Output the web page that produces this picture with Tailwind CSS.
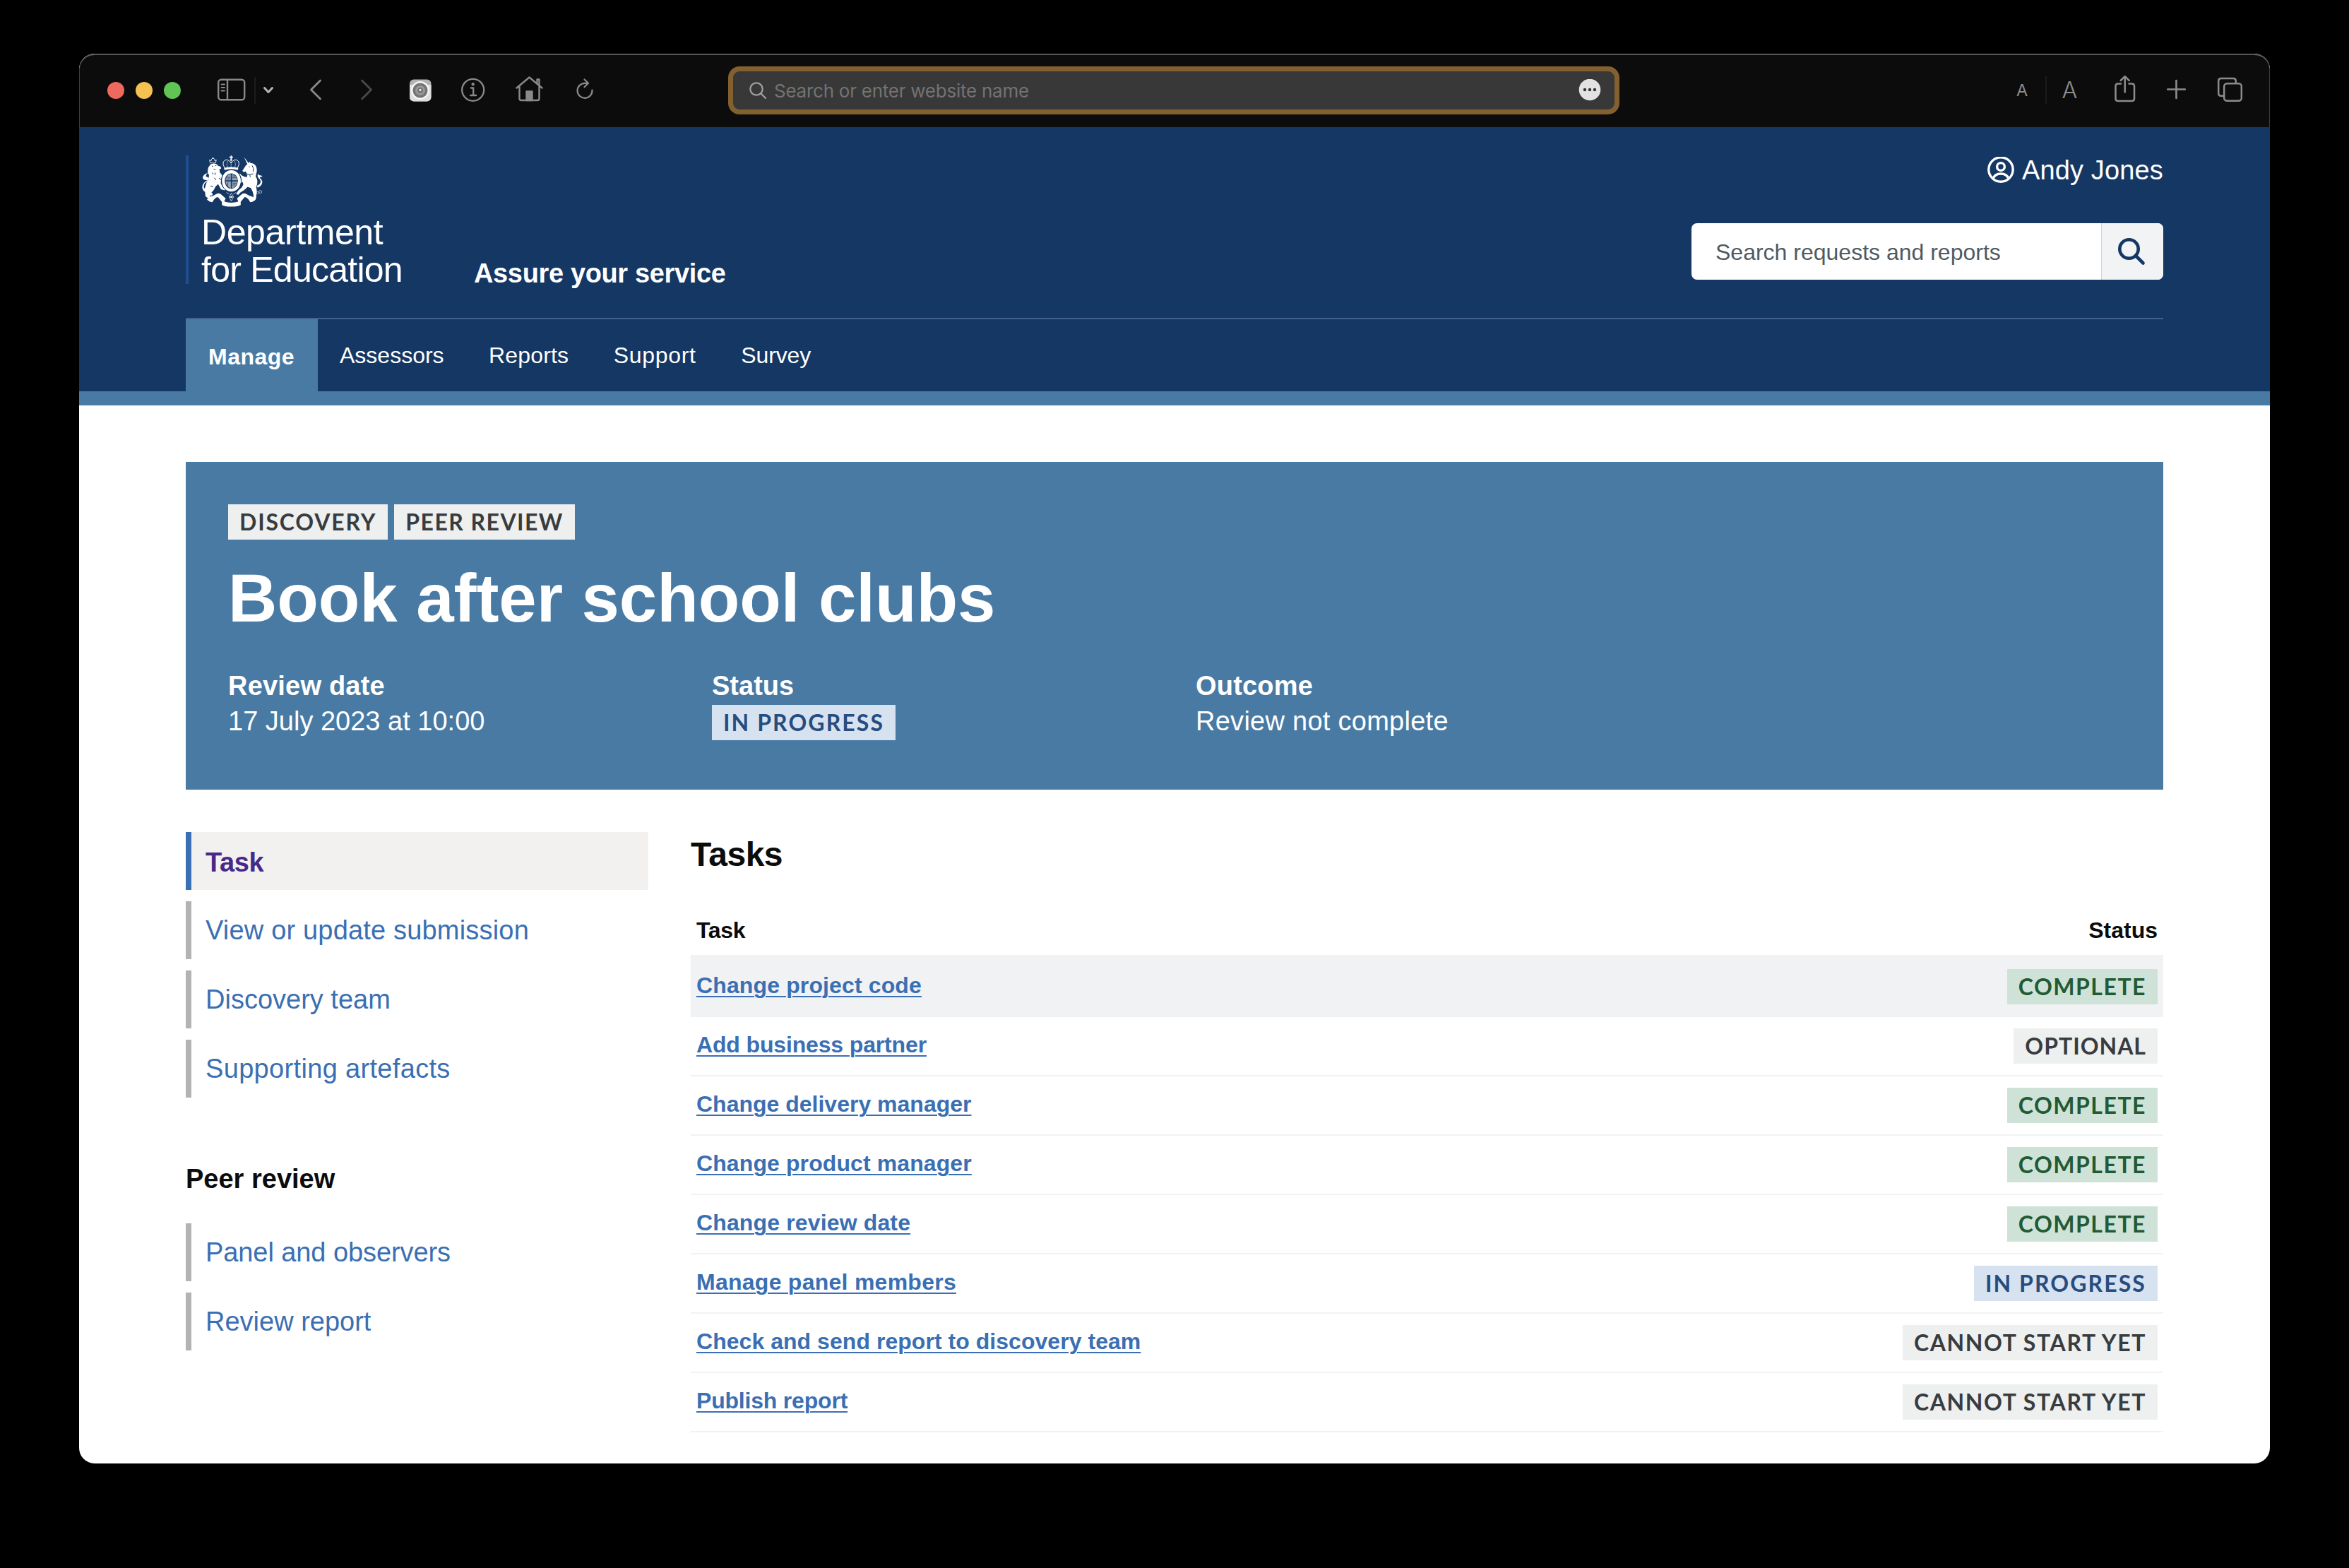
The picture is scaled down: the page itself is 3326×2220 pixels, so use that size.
<!DOCTYPE html>
<html lang="en">
<head>
<meta charset="utf-8">
<title>Assure your service</title>
<script src="https://cdn.jsdelivr.net/npm/@tailwindcss/browser@4"></script>
</head>
<body class="bg-black font-['Liberation_Sans',Arial,sans-serif] text-[#0b0c0c]">
<div class="mx-[112px] mt-[76px] flex h-[1996px] w-[3102px] flex-col overflow-hidden rounded-[22px] bg-white">

  <!-- Browser toolbar -->
  <div class="flex h-[104px] shrink-0 items-start rounded-t-[22px] border-x border-t-2 border-x-[#3c3c3c] border-t-[#575757] bg-[#0c0c0c] pt-[29px]">
    <svg class="ml-[39px] h-10 w-[104px]" viewBox="152 107 104 40"><circle cx="164" cy="128" r="12" fill="#ee6a5f"/><circle cx="204" cy="128" r="12" fill="#f5c151"/><circle cx="244" cy="128" r="12" fill="#61c555"/></svg>
    <svg class="ml-[50px] h-10 w-[84px]" viewBox="306 107 84 40" fill="none" stroke="#8a8a8a" stroke-width="2.4" stroke-linecap="round" stroke-linejoin="round"><rect x="309.2" y="112.8" width="37" height="28.4" rx="4"/><path d="M322 113v28"/><path d="M313.5 119.5h4.5M313.5 124h4.5M313.5 128.5h4.5" stroke-width="1.8"/><path d="M361 110v36" stroke="#1c1c1c" stroke-width="2"/><path d="M374.5 124.5l5.500 6 5.500-6" stroke="#b4b4b4" stroke-width="3"/></svg>
    <svg class="ml-[46px] h-10 w-6" viewBox="436 107 24 40" fill="none" stroke="#8a8a8a" stroke-width="2.8" stroke-linecap="round" stroke-linejoin="round"><path d="M453.5 114L440.5 127l13 13"/></svg>
    <svg class="ml-[48px] h-10 w-6" viewBox="508 107 24 40" fill="none" stroke="#4a4a4a" stroke-width="2.8" stroke-linecap="round" stroke-linejoin="round"><path d="M512.5 114l13 13-13 13"/></svg>
    <svg class="ml-[46px] h-10 w-[34px]" viewBox="578 107 34 40"><rect x="580" y="112.5" width="30.5" height="31" rx="6" fill="#b4b4b4"/><path d="M580 120h30.5v17.500a6 6 0 0 1-6 6h-18.500a6 6 0 0 1-6-6z" fill="#dedede"/><circle cx="595" cy="128" r="13" fill="#f4f4f4"/><circle cx="595" cy="128" r="10.5" fill="#747474"/><circle cx="595" cy="128" r="7" fill="#999"/><circle cx="595" cy="128" r="4" fill="#777"/><circle cx="595" cy="127.5" r="1.4" fill="#fff"/></svg>
    <svg class="ml-[38px] h-10 w-10" viewBox="650 107 40 40" fill="none" stroke="#8a8a8a" stroke-width="2.3" stroke-linecap="round" stroke-linejoin="round"><circle cx="669.7" cy="127.3" r="15.5"/><path d="M667 124.5h3.200v10.500M666.2 135h8"/><circle cx="669.7" cy="119.3" r="1.1" fill="#8a8a8a"/></svg>
    <svg class="ml-[38px] h-10 w-11" viewBox="728 107 44 40" fill="none" stroke="#8a8a8a" stroke-width="2.4" stroke-linecap="round" stroke-linejoin="round"><path d="M731.5 124.5L749.5 109.5l18 15M735.5 122v17.500q0 2.500 2.500 2.500h23q2.500 0 2.500-2.500V122M760.5 118v-5.500h3v8.500"/><path d="M745.5 142v-12.500h8V142z" fill="#8a8a8a"/></svg>
    <svg class="ml-[42px] h-10 w-7" viewBox="814 107 28 40" fill="none" stroke="#8a8a8a" stroke-width="2.2" stroke-linecap="round" stroke-linejoin="round"><path d="M838.5 127.5a10.500 10.500 0 1 1-10.500-9.700h5M827.5 112.5l5.500 5.300-5.500 5.500"/></svg>
    <div class="ml-[189px] -mt-[13px] flex h-[68px] w-[1262px] items-center rounded-[16px] border-[7px] border-[#83602f] bg-[#383838] pl-[22px] pr-[19px]">
      <svg class="h-7 w-7" viewBox="0 0 28 28" fill="none" stroke="#a0a0a0" stroke-width="2.2" stroke-linecap="round"><circle cx="11" cy="12" r="8.7"/><path d="M17.3 18.3l6.700 6.700"/></svg>
      <span class="ml-[8px] grow font-[Inter,sans-serif] text-[26px] tracking-[-0.25px] text-[#737373]">Search or enter website name</span>
      <svg class="h-8 w-8" viewBox="0 0 32 32"><circle cx="16" cy="15" r="15.3" fill="#e2e2e2"/><g fill="#333"><circle cx="9" cy="15" r="2.2"/><circle cx="16" cy="15" r="2.2"/><circle cx="23" cy="15" r="2.2"/></g></svg>
    </div>
    <svg class="ml-[557px] h-10 w-[100px]" viewBox="2850 107 100 40"><g fill="#8c8c8c" font-family="Inter, sans-serif"><text x="2855" y="136" font-size="23.5">A</text><text x="2919.500" y="139" font-size="32.500" font-weight="300">A</text></g><path d="M2897 108v40" stroke="#1c1c1c" stroke-width="2"/></svg>
    <svg class="ml-[40px] h-10 w-[38px]" viewBox="2990 107 38 40" fill="none" stroke="#8c8c8c" stroke-width="2.5" stroke-linecap="round" stroke-linejoin="round"><path d="M3003 118.500h-4q-3.500 0-3.500 3.500v17.500q0 3.500 3.500 3.500h19.500q3.500 0 3.500-3.500V122q0-3.500-3.500-3.500h-4M3008.700 130.500V108.500M3002.700 114l6-5.800 6 5.800"/></svg>
    <svg class="ml-[38px] h-10 w-8" viewBox="3066 107 32 40" stroke="#8c8c8c" stroke-width="2.7" stroke-linecap="round"><path d="M3069.300 126.500h24.500M3081.500 114v25"/></svg>
    <svg class="ml-[40px] h-10 w-10" viewBox="3138 107 40 40" fill="none" stroke="#8c8c8c" stroke-width="2.5" stroke-linejoin="round"><rect x="3149.200" y="118.200" width="24.600" height="24.600" rx="4"/><path d="M3149 135.700h-4q-3.800 0-3.800-3.800v-17q0-3.800 3.800-3.800h17q3.800 0 3.800 3.800v3.500"/></svg>
  </div>

  <!-- Service header -->
  <header class="shrink-0 bg-[#153764] px-[151px] text-white">
    <div class="flex h-[272px] items-start border-b-2 border-[#436090]">
      <div class="mt-10 h-[182px] w-[408px] border-l-4 border-[#1f4f90] pl-[18px]">
        <svg class="-mt-px h-[75px] w-[88px]" viewBox="45 42 265 225" fill="#fff">
          <!-- lion -->
          <path d="M83 77l-3-13 7 4 2-8 6-5 6 5 2 8 6-4-3 13z" fill="none" stroke="#fff" stroke-width="2.5"/><circle cx="95" cy="57" r="3"/>
          <path d="M83 84q12-8 27-2 5 2 6 7l10 3q5 4 3 9l-8 4q4 5 2 10 8 9 14 20-8 12-9 28l8 16 12 6q0 6-4 9l-15-5-12-22q-12 8-16 20-4 10-13 16 8 4 4 12l-12 1 10 10-14 3-13-10-2-18-3-9 5-18q3-16 13-26l2-20q-8-8-5-20 0-14 8-20z"/>
          <path d="M69 203q-20-6-20-24 2-18 22-29-19 2-20-11 2-14 21-19-9 9-7 15 7 1 13 6-2 12-16 20-8 9-6 20 3 10 14 14z"/>
          <path d="M90 90l6 2M104 88l5 1M98 103l8 2M92 118l4 8M104 118l0 10M100 140l8 10M120 142q8 2 10 8M84 176l12 2" stroke="#153764" stroke-width="3" fill="none"/>
          <!-- unicorn -->
          <path d="M227 51l22 30-6 4z"/>
          <path d="M236 86l10-6 4-8 6 6q16 0 23 15 6 14 0 30l-2 12q10 14 6 32l-4 14q4 12 2 22l-2 24-6 10-8-4 3-18-4-16-8-16-14-4-12 12-18 12-10 10-8-4 8-14 16-14 6-12-2-10-12 4-4 14-8-4 4-18 12-8-12-8 2-12 6-6 6 8 12 6 8 2 4-14-6-10-10 4-4-6z"/>
          <path d="M221 112q6 10 18 13t28-2M228 124l-4 8M240 128l-2 10M252 128l2 9M248 92l4 2M262 88q8 10 4 26" stroke="#153764" stroke-width="3" fill="none"/>
          <path d="M282 174q16-6 16-18-2-10-10-16-6-8 0-16l5 6q10-2 13 6-8-2-12 4 12 10 11 20-2 16-20 22z"/>
          <g fill="none" stroke="#fff" stroke-opacity=".7" stroke-width="2.5"><circle cx="273" cy="208" r="5"/><circle cx="285" cy="204" r="5"/><circle cx="297" cy="200" r="6"/></g>
          <!-- crown -->
          <g fill="none" stroke="#fff" stroke-width="3"><path d="M145 99q-10-16-6-27 8-12 19-8 9 4 14 14 5-10 14-14 12-4 19 8 4 11-6 27"/><path d="M158 97q-8-18 2-30M187 97q8-18-2-30M172 66v30" stroke-width="2.5" stroke-dasharray="3 1.500"/></g>
          <path d="M142 98q30-8 61 0l-2 9q-28-8-57 0z"/><path d="M170 45h5v5h5v5h-5v6h-5v-6h-5v-5h5z"/><circle cx="172.500" cy="64" r="4"/>
          <!-- garter and shield -->
          <ellipse cx="173" cy="153" rx="42" ry="46" fill="none" stroke="#153764" stroke-width="4"/>
          <path d="M173 108c23 0 40 19 40 45s-17 46-40 46-40-20-40-46 17-45 40-45zm0 13c-16 0-28 14-28 32s12 34 28 34 28-16 28-34-12-32-28-32z" fill-rule="evenodd"/>
          <path d="M171 124v27h-23q3-24 23-27zM176 124q20 3 23 27h-23zM148 156h23v29q-18-5-23-29zM176 156h23q-5 25-23 29z" fill-opacity=".55"/>
          <path d="M152 138h17M150 145h20M179 132h14M178 140h18M179 163h16M179 171h12M158 160v16" stroke="#153764" stroke-width="2.5"/>
          <!-- ribbon -->
          <path d="M69 233q8-12 26-16l18-10q12-2 20 7l16 14-6 12 4 8-15-6-16-20q-8 0-16 10l-8 12q-12 0-23-11zM277 233q-8-12-26-16l-18-10q-12-2-20 7l-16 14 6 12-4 8 15-6 16-20q8 0 16 10l8 12q12 0 23-11z"/>
          <path d="M133 238q40 16 80 0v18q-10 7-40 7t-40-7z"/>
          <path d="M173 205l9 17-9 18-9-18zM152 202l12 8M194 202l-12 8M162 222h22" fill="none" stroke="#fff" stroke-opacity=".8" stroke-width="2.5"/><circle cx="173" cy="222" r="4"/>
        </svg>
        <div class="mt-[9px] whitespace-nowrap text-[50px] leading-[53px] tracking-[-0.4px]">Department<br><span class="tracking-[-0.75px]">for Education</span></div>
      </div>
      <div class="mt-[182px] grow whitespace-nowrap text-[38px] font-bold leading-[50px] tracking-[-0.36px]">Assure your service</div>
      <div class="mt-[39px] w-[668px]">
        <div class="flex items-center justify-end gap-[11px]">
          <svg class="h-[38px] w-[38px]" viewBox="0 0 38 38" fill="none" stroke="#fff" stroke-width="3.4"><circle cx="19" cy="18" r="17.2"/><circle cx="19" cy="14" r="5.4"/><path d="M8 31q2.500-7 11-7t11 7"/></svg>
          <span class="text-[38px] leading-[44px] tracking-[0.15px]">Andy Jones</span>
        </div>
        <div class="mt-[53px] flex h-20 overflow-hidden rounded-lg bg-white">
          <div class="grow pl-[34px] text-[32px] leading-[82px] text-[#505a5f]">Search requests and reports</div>
          <div class="flex w-[88px] items-center justify-center border-l border-[#cfd3d6] bg-[#f2f3f4]">
            <svg class="mr-[3px] h-10 w-10" viewBox="0 0 40 40" fill="none" stroke="#153764" stroke-width="4.6" stroke-linecap="round"><circle cx="16.5" cy="16.5" r="13.2"/><path d="M26 26l10.500 10.500"/></svg>
          </div>
        </div>
      </div>
    </div>
    <nav class="flex h-[102px] text-[32px] leading-[40px]">
      <a class="w-[187px] bg-[#487aa4] pl-8 pt-[33px] font-bold tracking-[0.5px]">Manage</a>
      <div class="ml-[31px] flex gap-[63.5px] pt-[31px]"><a>Assessors</a><a class="tracking-[0.15px]">Reports</a><a class="tracking-[0.7px]">Support</a><a class="tracking-[-0.1px]">Survey</a></div>
    </nav>
  </header>
  <div class="h-5 shrink-0 bg-[#487aa4]"></div>

  <main class="px-[151px] pt-20">
    <!-- Review summary -->
    <section class="h-[464px] bg-[#487aa4] px-[60px] pt-[60px] text-white">
      <div class="flex gap-[9px] font-[Lato,sans-serif] text-[32px] font-bold leading-[49px] text-[#383c3f]">
        <span class="h-[50px] bg-[#eeefef] px-4 tracking-[1.81px]">DISCOVERY</span>
        <span class="h-[50px] bg-[#eeefef] px-4 tracking-[1.45px]">PEER REVIEW</span>
      </div>
      <h1 class="mt-[33px] text-[96px] font-bold leading-[100px] tracking-[-0.08px]">Book after school clubs</h1>
      <dl class="mt-[49px] grid grid-cols-[685px_685px_685px] text-[38px] leading-[50px]">
        <div><dt class="font-bold tracking-[0.2px]">Review date</dt><dd>17 July 2023 at 10:00</dd></div>
        <div><dt class="font-bold">Status</dt><dd class="mt-[2px] flex"><span class="h-[50px] bg-[#d6e2f0] px-4 font-[Lato,sans-serif] text-[32px] font-bold leading-[49px] tracking-[2.08px] text-[#264c80]">IN PROGRESS</span></dd></div>
        <div><dt class="font-bold tracking-[0.2px]">Outcome</dt><dd class="tracking-[0.27px]">Review not complete</dd></div>
      </dl>
    </section>

    <div class="mt-[60px] flex">
      <!-- Side navigation -->
      <aside class="w-[655px] text-[38px] text-[#3a6fb3]">
        <div class="flex flex-col gap-4 leading-[82px]">
          <a class="h-[82px] border-l-8 border-[#3a6fb3] bg-[#f3f1f0] pl-5 pt-[2px] font-bold tracking-[-0.4px] text-[#47298a]">Task</a>
          <a class="h-[82px] border-l-8 border-[#b1b3b4] pl-5 tracking-[0.18px]">View or update submission</a>
          <a class="h-[82px] border-l-8 border-[#b1b3b4] pl-5">Discovery team</a>
          <a class="h-[82px] border-l-8 border-[#b1b3b4] pl-5 tracking-[0.33px]">Supporting artefacts</a>
        </div>
        <h2 class="mt-[90px] font-bold leading-[50px] text-[#0b0c0c]">Peer review</h2>
        <div class="mt-[38px] flex flex-col gap-4 leading-[82px]">
          <a class="h-[82px] border-l-8 border-[#b1b3b4] pl-5 tracking-[-0.08px]">Panel and observers</a>
          <a class="h-[82px] border-l-8 border-[#b1b3b4] pl-5">Review report</a>
        </div>
      </aside>

      <!-- Task list -->
      <section class="ml-[60px] w-[2085px]">
        <h2 class="mt-[2px] text-[48px] font-bold leading-[60px] tracking-[-0.5px]">Tasks</h2>
        <div class="mt-[57px] flex h-[55px] justify-between px-2 text-[32px] font-bold leading-[40px]"><span class="tracking-[-0.3px]">Task</span><span>Status</span></div>
        <div class="flex h-[88px] items-start justify-between bg-[#f1f2f4] px-2 pt-5">
          <a class="mt-[3px] text-[32px] font-bold leading-[40px] tracking-[0.13px] text-[#3a6fb3] underline decoration-2 underline-offset-[4px]">Change project code</a>
          <span class="h-[50px] bg-[#cfe2d8] px-4 font-[Lato,sans-serif] text-[32px] font-bold leading-[49px] tracking-[1.5px] text-[#225a34]">COMPLETE</span>
        </div>
        <div class="flex h-[84px] items-start justify-between border-b-2 border-[#f1f2f3] px-2 pt-4">
          <a class="mt-[3px] text-[32px] font-bold leading-[40px] tracking-[-0.15px] text-[#3a6fb3] underline decoration-2 underline-offset-[4px]">Add business partner</a>
          <span class="h-[50px] bg-[#eeefef] px-4 font-[Lato,sans-serif] text-[32px] font-bold leading-[49px] tracking-[1px] text-[#383c3f]">OPTIONAL</span>
        </div>
        <div class="flex h-[84px] items-start justify-between border-b-2 border-[#f1f2f3] px-2 pt-4">
          <a class="mt-[3px] text-[32px] font-bold leading-[40px] text-[#3a6fb3] underline decoration-2 underline-offset-[4px]">Change delivery manager</a>
          <span class="h-[50px] bg-[#cfe2d8] px-4 font-[Lato,sans-serif] text-[32px] font-bold leading-[49px] tracking-[1.5px] text-[#225a34]">COMPLETE</span>
        </div>
        <div class="flex h-[84px] items-start justify-between border-b-2 border-[#f1f2f3] px-2 pt-4">
          <a class="mt-[3px] text-[32px] font-bold leading-[40px] tracking-[0.1px] text-[#3a6fb3] underline decoration-2 underline-offset-[4px]">Change product manager</a>
          <span class="h-[50px] bg-[#cfe2d8] px-4 font-[Lato,sans-serif] text-[32px] font-bold leading-[49px] tracking-[1.5px] text-[#225a34]">COMPLETE</span>
        </div>
        <div class="flex h-[84px] items-start justify-between border-b-2 border-[#f1f2f3] px-2 pt-4">
          <a class="mt-[3px] text-[32px] font-bold leading-[40px] tracking-[0.14px] text-[#3a6fb3] underline decoration-2 underline-offset-[4px]">Change review date</a>
          <span class="h-[50px] bg-[#cfe2d8] px-4 font-[Lato,sans-serif] text-[32px] font-bold leading-[49px] tracking-[1.5px] text-[#225a34]">COMPLETE</span>
        </div>
        <div class="flex h-[84px] items-start justify-between border-b-2 border-[#f1f2f3] px-2 pt-4">
          <a class="mt-[3px] text-[32px] font-bold leading-[40px] tracking-[0.26px] text-[#3a6fb3] underline decoration-2 underline-offset-[4px]">Manage panel members</a>
          <span class="h-[50px] bg-[#d6e2f0] px-4 font-[Lato,sans-serif] text-[32px] font-bold leading-[49px] tracking-[2.08px] text-[#264c80]">IN PROGRESS</span>
        </div>
        <div class="flex h-[84px] items-start justify-between border-b-2 border-[#f1f2f3] px-2 pt-4">
          <a class="mt-[3px] text-[32px] font-bold leading-[40px] tracking-[0.04px] text-[#3a6fb3] underline decoration-2 underline-offset-[4px]">Check and send report to discovery team</a>
          <span class="h-[50px] bg-[#eeefef] px-4 font-[Lato,sans-serif] text-[32px] font-bold leading-[49px] tracking-[1.6px] text-[#383c3f]">CANNOT START YET</span>
        </div>
        <div class="flex h-[84px] items-start justify-between border-b-2 border-[#f1f2f3] px-2 pt-4">
          <a class="mt-[3px] text-[32px] font-bold leading-[40px] tracking-[-0.2px] text-[#3a6fb3] underline decoration-2 underline-offset-[4px]">Publish report</a>
          <span class="h-[50px] bg-[#eeefef] px-4 font-[Lato,sans-serif] text-[32px] font-bold leading-[49px] tracking-[1.6px] text-[#383c3f]">CANNOT START YET</span>
        </div>
      </section>
    </div>
  </main>
</div>
</body>
</html>
